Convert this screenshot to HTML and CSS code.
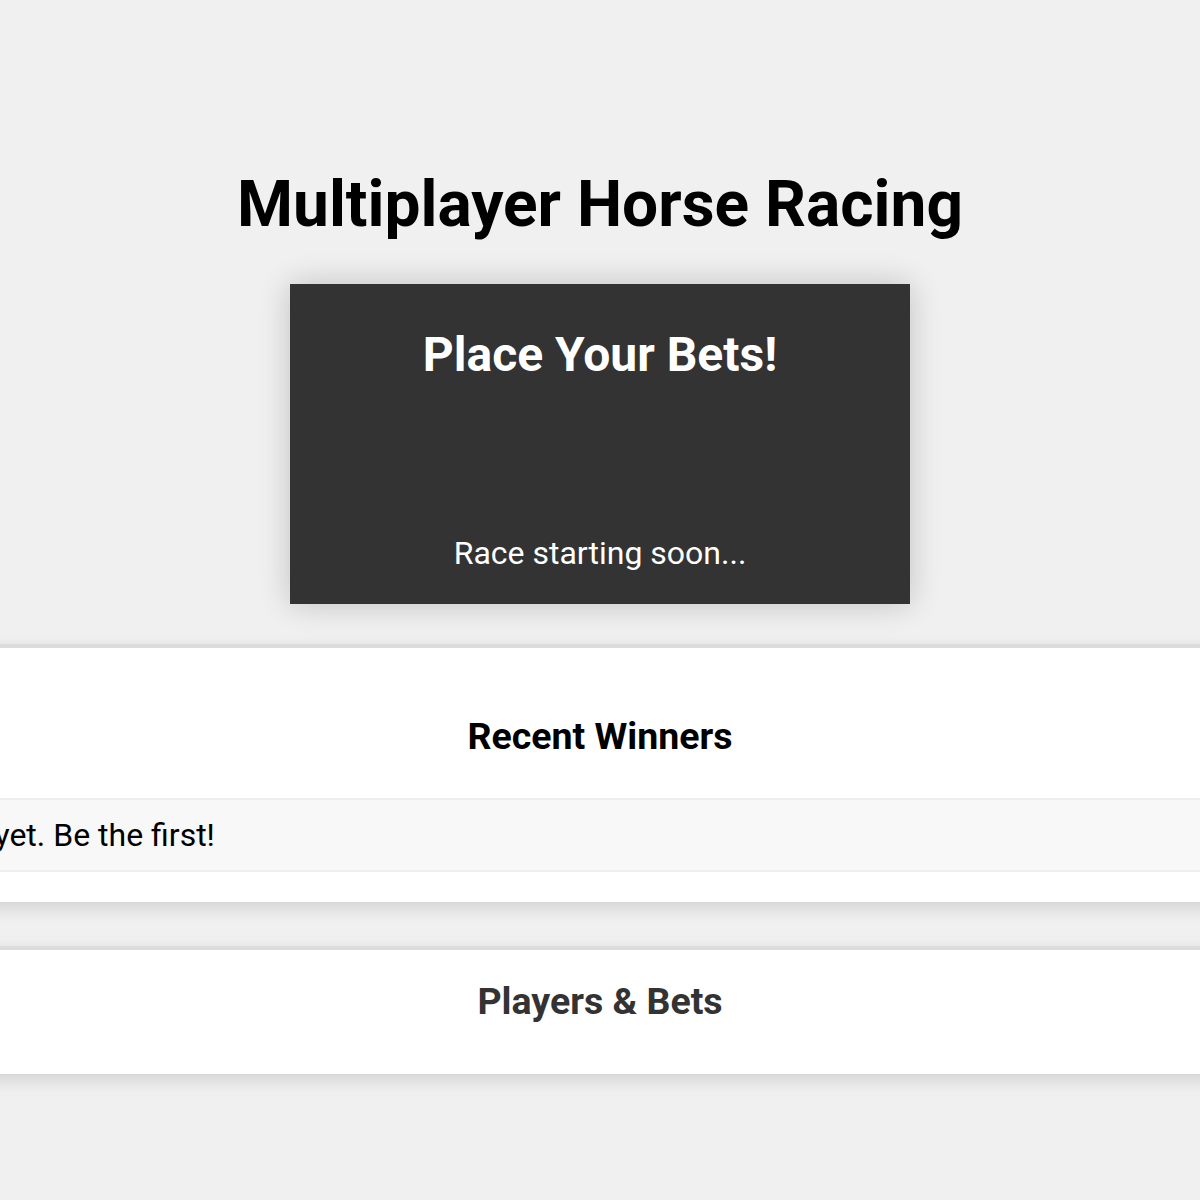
FILE: index.html
```html
<!DOCTYPE html>
<html lang="en">
<head>
<meta charset="utf-8">
<title>Multiplayer Horse Racing</title>
<link rel="stylesheet" href="styles.css">
</head>
<body>
<main class="page">
  <h1 class="page-title">Multiplayer Horse Racing</h1>
  <section class="race-box">
    <h2 class="race-title">Place Your Bets!</h2>
    <p class="race-status">Race starting soon...</p>
  </section>
  <div class="wide-wrap">
    <section class="wide-panel winners">
      <h3 class="panel-title">Recent Winners</h3>
      <div class="winner-row">No winners yet. Be the first!</div>
    </section>
    <section class="wide-panel players">
      <h3 class="panel-title dim">Players &amp; Bets</h3>
    </section>
  </div>
</main>
</body>
</html>
```

FILE: styles.css
```css
html, body {
  margin: 0;
  padding: 0;
  background: #f0f0f0;
}
body {
  font-family: Roboto, "Liberation Sans", Arial, sans-serif;
  color: #000;
  overflow-x: hidden;
}
.page {
  display: flex;
  flex-direction: column;
  align-items: center;
  padding-top: 167px;
  padding-bottom: 80px;
}
.page-title {
  margin: 0;
  font-size: 64px;
  font-weight: 700;
  line-height: 75px;
  text-align: center;
}
.race-box {
  margin-top: 42px;
  width: 620px;
  height: 320px;
  box-sizing: border-box;
  background: #333;
  color: #fff;
  display: flex;
  flex-direction: column;
  justify-content: space-between;
  align-items: center;
  padding: 43px 20px 32px;
  box-shadow: 0 0 30px rgba(0, 0, 0, 0.2);
}
.race-title {
  margin: 0;
  font-size: 48px;
  font-weight: 700;
  line-height: 56px;
}
.race-status {
  margin: 0;
  font-size: 32px;
  font-weight: 400;
  line-height: 37.5px;
}
.wide-wrap {
  align-self: stretch;
  overflow: hidden;
  padding: 40px 0 40px;
  display: flex;
  flex-direction: column;
  gap: 44px;
}
.wide-panel {
  margin: 0 -194px;
  background: #fff;
  border-top: 4px solid #dcdcdc;
  box-shadow: 0 6px 16px rgba(0, 0, 0, 0.13);
}
.winners {
  padding: 66px 0 30px;
}
.players {
  padding: 29px 0 51px;
}
.panel-title {
  margin: 0;
  text-align: center;
  font-size: 37.5px;
  font-weight: 700;
  line-height: 44px;
}
.panel-title.dim {
  color: #333;
}
.winner-row {
  margin-top: 40px;
  background: #f8f8f8;
  border-top: 2px solid #eeeeee;
  border-bottom: 2px solid #eeeeee;
  padding: 17px 20px 15px;
  font-size: 32px;
  line-height: 37.5px;
  text-align: left;
}
```
